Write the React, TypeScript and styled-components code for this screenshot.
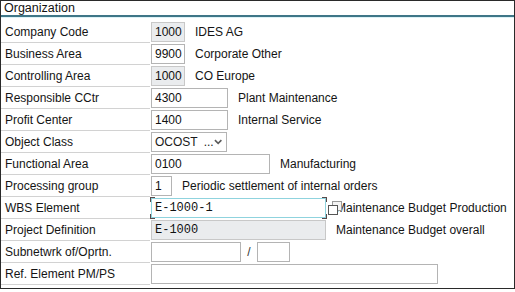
import React from 'react';
import styled, { createGlobalStyle, css } from 'styled-components';

const GlobalStyle = createGlobalStyle`
  html, body {
    margin: 0;
    padding: 0;
    background: #ffffff;
  }
  body {
    font-family: 'Liberation Sans', Arial, sans-serif;
    font-size: 12px;
    color: #1a1a1a;
  }
`;

type FieldKind = 'plain' | 'readonly' | 'focus';

interface IRow {
  label: string;
  value?: string;
  width: number;
  kind?: FieldKind;
  mono?: boolean;
  desc?: string;
  select?: boolean;
}

const rows: IRow[] = [
  { label: 'Company Code', value: '1000', width: 34, kind: 'readonly', desc: 'IDES AG' },
  { label: 'Business Area', value: '9900', width: 34, desc: 'Corporate Other' },
  { label: 'Controlling Area', value: '1000', width: 34, kind: 'readonly', desc: 'CO Europe' },
  { label: 'Responsible CCtr', value: '4300', width: 77, desc: 'Plant Maintenance' },
  { label: 'Profit Center', value: '1400', width: 77, desc: 'Internal Service' },
  { label: 'Object Class', value: 'OCOST', width: 76, select: true },
  { label: 'Functional Area', value: '0100', width: 119, desc: 'Manufacturing' },
  { label: 'Processing group', value: '1', width: 21, desc: 'Periodic settlement of internal orders' },
  { label: 'WBS Element', value: 'E-1000-1', width: 175, kind: 'focus', mono: true, desc: 'Maintenance Budget Production' },
  { label: 'Project Definition', value: 'E-1000', width: 175, kind: 'readonly', mono: true, desc: 'Maintenance Budget overall' },
];

function App(): React.ReactElement {
  return (
    <>
      <GlobalStyle />
      <Frame>
        <Header>Organization</Header>
        <Grid>
          {rows.map((r) => (
            <React.Fragment key={r.label}>
              <Label>{r.label}</Label>
              <FieldArea>
                {r.select ? (
                  <Select $width={r.width}>
                    <span>{r.value}</span>
                    <Dots>...</Dots>
                    <Chevron viewBox="0 0 9 6" width="9" height="6">
                      <path d="M1 1 L4.5 4.5 L8 1" fill="none" stroke="#5a5a5a" strokeWidth="1.7" />
                    </Chevron>
                  </Select>
                ) : (
                  <Input $width={r.width} $kind={r.kind ?? 'plain'} $mono={r.mono}>
                    {r.value}
                    {r.kind === 'focus' && (
                      <>
                        <Corner $pos="tl" />
                        <Corner $pos="bl" />
                        <Corner $pos="tr" />
                        <Corner $pos="br" />
                      </>
                    )}
                  </Input>
                )}
                {r.kind === 'focus' && (
                  <CopyIcon viewBox="0 0 14 14" width="14" height="14">
                    <rect x="4.5" y="0.5" width="9" height="9" fill="#f4f4f4" stroke="#9a9a9a" />
                    <rect x="0.5" y="4.5" width="9" height="9" fill="#ffffff" stroke="#555" />
                  </CopyIcon>
                )}
                {r.desc && <Desc>{r.desc}</Desc>}
              </FieldArea>
            </React.Fragment>
          ))}
          <Label>Subnetwrk of/Oprtn.</Label>
          <FieldArea>
            <Input $width={90} $kind="plain" />
            <Slash>/</Slash>
            <Input $width={33} $kind="plain" />
          </FieldArea>
          <Label>Ref. Element PM/PS</Label>
          <FieldArea>
            <Input $width={287} $kind="plain" />
          </FieldArea>
        </Grid>
      </Frame>
    </>
  );
}

export default App;

const Frame = styled.div`
  box-sizing: border-box;
  width: 515px;
  height: 289px;
  border: 1px solid #2a2a2a;
  background: #ffffff;
  overflow: hidden;
`;

const Header = styled.div`
  height: 14px;
  line-height: 14px;
  padding-left: 3px;
  border-bottom: 2px solid #3f7687;
  box-shadow: 0 1px 0 #dcf2f6;
  margin-bottom: 4px;
  font-size: 12.5px;
  color: #111;
`;

const Grid = styled.div`
  display: grid;
  grid-template-columns: 149px 1fr;
  grid-auto-rows: 22px;
`;

const Label = styled.div`
  display: flex;
  align-items: center;
  padding-left: 4px;
  border-bottom: 1px solid #d2d2d2;
  white-space: nowrap;
  color: #141414;
`;

const FieldArea = styled.div`
  position: relative;
  display: flex;
  align-items: center;
  padding-left: 1px;
  white-space: nowrap;
`;

const Input = styled.div<{ $width: number; $kind: FieldKind; $mono?: boolean }>`
  position: relative;
  box-sizing: border-box;
  width: ${(p) => p.$width}px;
  height: 20px;
  padding-left: 3px;
  display: flex;
  align-items: center;
  border: 1px solid #b4b4b4;
  background: #ffffff;
  color: #111;
  font-family: ${(p) => (p.$mono ? "'Liberation Mono', 'Courier New', monospace" : "'Liberation Sans', Arial, sans-serif")};
  ${(p) =>
    p.$kind === 'readonly' &&
    css`
      background: #eaecee;
      border-color: #c8c8c8;
    `}
  ${(p) =>
    p.$kind === 'focus' &&
    css`
      border-color: #8fd3de;
    `}
`;

const Corner = styled.span<{ $pos: 'tl' | 'tr' | 'bl' | 'br' }>`
  position: absolute;
  width: 4px;
  height: 4px;
  border-color: #5a4a4a;
  border-style: solid;
  border-width: 0;
  ${(p) => (p.$pos[0] === 't' ? 'top: -2px;' : 'bottom: -2px;')}
  ${(p) => (p.$pos[1] === 'l' ? 'left: -2px;' : 'right: -2px;')}
  ${(p) => (p.$pos[0] === 't' ? 'border-top-width: 1px;' : 'border-bottom-width: 1px;')}
  ${(p) => (p.$pos[1] === 'l' ? 'border-left-width: 1px;' : 'border-right-width: 1px;')}
`;

const Select = styled.div<{ $width: number }>`
  box-sizing: border-box;
  width: ${(p) => p.$width}px;
  height: 20px;
  padding: 0 4px 0 3px;
  display: flex;
  align-items: center;
  border: 1px solid #b4b4b4;
  background: #ffffff;
`;

const Dots = styled.span`
  margin-left: 6px;
  flex: 1;
`;

const Chevron = styled.svg`
  display: block;
`;

const CopyIcon = styled.svg`
  position: absolute;
  left: 178px;
  top: 4px;
`;

const Desc = styled.span`
  margin-left: 10px;
  color: #141414;
`;

const Slash = styled.span`
  width: 16px;
  text-align: center;
  color: #333;
`;
